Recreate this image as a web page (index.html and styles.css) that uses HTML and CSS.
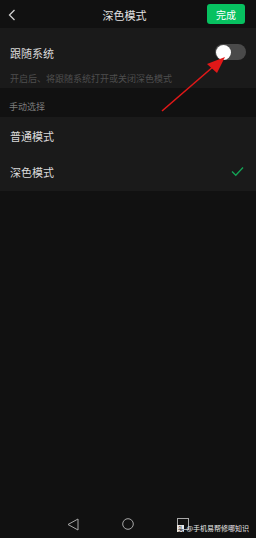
FILE: index.html
```html
<!DOCTYPE html>
<html lang="zh">
<head>
<meta charset="utf-8">
<title>深色模式</title>
<link rel="stylesheet" href="styles.css">
</head>
<body>
<div class="page">
  <header class="topbar">
    <div class="back">
      <svg width="8" height="12" viewBox="0 0 8 12"><path d="M6.5 1 L1.5 6 L6.5 11" fill="none" stroke="#cfcfcf" stroke-width="1.3"/></svg>
    </div>
    <div class="title">深色模式</div>
    <div class="actions"><button class="done">完成</button></div>
  </header>

  <section class="follow">
    <div class="follow-title">跟随系统</div>
    <div class="toggle"><span class="knob"></span></div>
    <div class="follow-sub">开启后、将跟随系统打开或关闭深色模式</div>
  </section>

  <div class="group-label">手动选择</div>

  <ul class="list">
    <li class="item">普通模式</li>
    <li class="item">深色模式
      <svg class="check" width="13" height="11" viewBox="0 0 13 11"><path d="M1 5.5 L4.8 9.3 L12 1.5" fill="none" stroke="#14a456" stroke-width="1.3"/></svg>
    </li>
  </ul>

  <div class="spacer"></div>

  <nav class="navbar">
    <svg width="12" height="13" viewBox="0 0 12 13"><path d="M11 1 L1 6.5 L11 12 Z" fill="none" stroke="#a8a8a8" stroke-width="1"/></svg>
    <svg width="12" height="12" viewBox="0 0 12 12"><circle cx="6" cy="6" r="5.3" fill="none" stroke="#a8a8a8" stroke-width="1"/></svg>
    <svg width="12" height="12" viewBox="0 0 12 12"><rect x="0.5" y="0.5" width="11" height="11" fill="none" stroke="#a8a8a8" stroke-width="1"/></svg>
  </nav>

  <div class="watermark"><span class="wm-logo">头</span>@手机易帮修哪知识</div>

  <svg class="arrow" width="256" height="130" viewBox="0 0 256 130">
    <line x1="162" y1="111" x2="214" y2="66" stroke="#e01818" stroke-width="1.6"/>
    <polygon points="225,57 207,64 217,73" fill="#e01818"/>
  </svg>
</div>
</body>
</html>
```

FILE: styles.css
```css
* { box-sizing: border-box; }
html, body { margin: 0; padding: 0; }
body {
  background: #111111;
  font-family: "Noto Sans CJK SC", "Noto Sans", sans-serif;
  color: #dcdcdc;
}
.page {
  position: relative;
  width: 256px;
  height: 538px;
  display: flex;
  flex-direction: column;
  overflow: hidden;
}
.topbar {
  height: 28px;
  display: grid;
  grid-template-columns: 1fr auto 1fr;
  align-items: center;
  padding: 0 11px 0 8px;
  background: #111111;
}
.back { display: flex; align-items: center; padding-top: 1px; }
.title { font-size: 11px; line-height: 14px; color: #e2e2e2; padding-right: 4px; padding-top: 1px; }
.actions { display: flex; justify-content: flex-end; }
.done {
  width: 38px;
  height: 20px;
  border: 0;
  border-radius: 3px;
  background: #07c160;
  color: #ffffff;
  font-family: inherit;
  font-size: 10px;
  padding: 0;
}
.follow {
  background: #1a1a1a;
  height: 60px;
  padding: 13px 10px 0 10px;
  display: grid;
  grid-template-columns: 1fr auto;
  align-items: center;
}
.follow-title { font-size: 11px; line-height: 16px; color: #dadada; }
.follow-sub {
  grid-column: 1 / 3;
  margin-top: 5px;
  font-size: 9px;
  line-height: 12px;
  color: #4e4e4e;
}
.toggle {
  position: relative;
  width: 31px;
  height: 16px;
  border-radius: 8px;
  background: #4a4a4a;
  margin-top: -1px;
}
.knob {
  position: absolute;
  left: 1px;
  top: 0.5px;
  width: 15px;
  height: 15px;
  border-radius: 50%;
  background: #ffffff;
}
.group-label {
  height: 29px;
  padding: 13px 9px 0 9px;
  font-size: 9px;
  line-height: 12px;
  color: #7c7c7c;
}
.list {
  list-style: none;
  margin: 0;
  padding: 0 0 1px 0;
  background: #1a1a1a;
}
.item {
  height: 36px;
  padding: 0 12px 0 10px;
  display: flex;
  align-items: center;
  justify-content: space-between;
  font-size: 11px;
  color: #dadada;
}
.item:first-child { height: 37px; }
.check { margin-top: -1px; }
.spacer { flex: 1; }
.navbar {
  height: 28px;
  display: flex;
  justify-content: center;
  align-items: center;
  gap: 43px;
}
.watermark {
  position: absolute;
  right: 7px;
  bottom: 5px;
  display: flex;
  align-items: center;
  gap: 1px;
  font-size: 7px;
  line-height: 9px;
  color: #e8e8e8;
}
.wm-logo {
  font-size: 6px;
  line-height: 7px;
  background: #e8e8e8;
  color: #111;
  padding: 0 0.5px;
  margin-right: 1px;
}
.arrow {
  position: absolute;
  left: 0;
  top: 0;
  pointer-events: none;
}
```
